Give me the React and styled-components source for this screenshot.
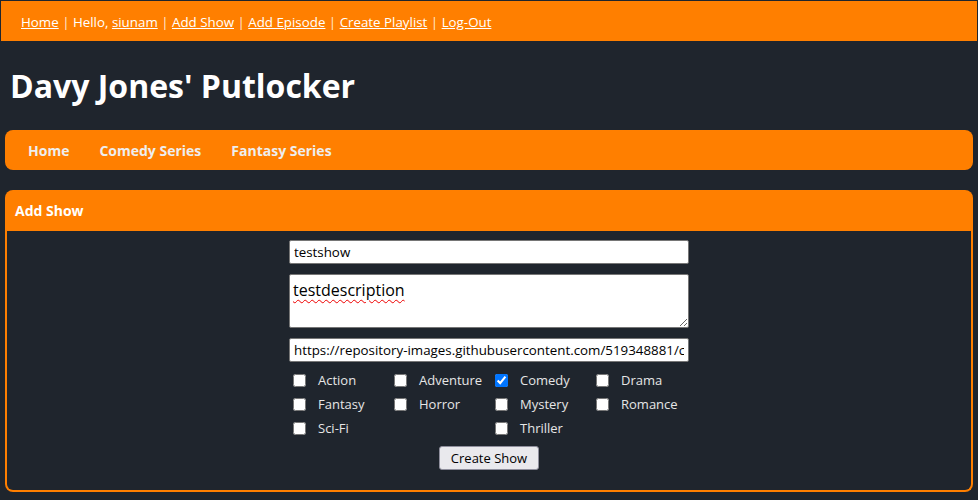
import React from 'react';
import styled, { createGlobalStyle } from 'styled-components';

const GlobalStyle = createGlobalStyle`
  html, body { margin: 0; padding: 0; background: #1f252d; }
  body { font-family: "Open Sans", "Noto Sans", sans-serif; color: #fff; }
  * { box-sizing: border-box; }
`;

const Page = styled.div`
  padding: 1px;
  min-height: 500px;
`;

const TopBar = styled.div`
  background: #ff7f00;
  height: 40px;
  padding: 2px 20px 0;
  display: flex; align-items: center;
  font-size: 13.33px;
  color: #fff;
  white-space: pre;
`;

const TopLink = styled.a`
  color: #fff;
  text-decoration: underline;
`;

const Sep = styled.span`
  color: rgba(255,255,255,0.85);
`;

const Main = styled.div`
  padding: 0 4px;
`;

const Title = styled.h1`
  margin: 23px 0 22px 5px;
  font-size: 32px;
  line-height: 44px;
  font-weight: 700;
  color: #fff;
`;

const NavBar = styled.nav`
  background: #ff7f00;
  border-radius: 8px;
  height: 40px;
  padding: 0 8px;
  display: flex; align-items: center;
`;

const NavLink = styled.a`
  color: #eee;
  font-weight: 700;
  font-size: 14px;
  padding: 0 15px;
  text-decoration: none;
`;

const Panel = styled.section`
  margin-top: 20px;
`;

const PanelHeader = styled.div`
  background: #ff7f00;
  border-radius: 8px 8px 0 0;
  height: 41px;
  padding: 0 10px;
  display: flex; align-items: center;
  font-size: 14px; font-weight: 700;
  color: #fff;
`;

const PanelBody = styled.div`
  border: 2px solid #ff7f00;
  border-top: none;
  border-radius: 0 0 8px 8px;
  padding: 9px 0 20px;
`;

const Form = styled.form`
  width: 400px;
  margin: 0 auto;
  display: flex; flex-direction: column;
`;

const TextInput = styled.input`
  width: 400px; height: 24px;
  margin: 0 0 ${p => p.$gap || 0}px;
  padding: 0 4px;
  border: 1px solid #767676;
  border-radius: 2px;
  background: #fff;
  color: #000;
  font-family: "Open Sans", "Noto Sans", sans-serif;
  font-size: 13.33px;
`;

const TextArea = styled.textarea`
  width: 400px; height: 54px;
  margin: 0 0 10px;
  padding: 4px 3px 2px;
  border: 1px solid #767676;
  border-radius: 2px;
  background: #fff;
  color: #000;
  font-family: "Open Sans", "Noto Sans", sans-serif;
  font-size: 16px;
  line-height: 22px;
  text-decoration: underline wavy #e00;
  text-decoration-thickness: 1px;
  text-underline-offset: 3px;
  resize: both;
`;

const Genres = styled.div`
  display: grid;
  grid-template-columns: repeat(4, 101px);
  grid-auto-rows: 24px;
  margin-top: 6px;
`;

const Genre = styled.label`
  display: flex; align-items: center;
  font-size: 13px;
  color: #e6e6e6;
  input { margin: 0 12px 0 4px; width: 13px; height: 13px; }
`;

const Button = styled.button`
  align-self: center;
  margin-top: 6px;
  width: 100px; height: 24px;
  padding: 0;
  border: 1px solid #8f8f9d;
  border-radius: 3px;
  background: #e9e9ed;
  color: #000;
  font-family: "Open Sans", "Noto Sans", sans-serif;
  font-size: 13px;
`;

const genres = [
  ['Action'], ['Adventure'], ['Comedy', true], ['Drama'],
  ['Fantasy'], ['Horror'], ['Mystery'], ['Romance'],
  ['Sci-Fi'], null, ['Thriller'],
];

export default function App() {
  return (
    <Page>
      <GlobalStyle />
      <TopBar>
        <TopLink href="#">Home</TopLink><Sep> | </Sep>Hello, <TopLink href="#">siunam</TopLink><Sep> | </Sep>
        <TopLink href="#">Add Show</TopLink><Sep> | </Sep>
        <TopLink href="#">Add Episode</TopLink><Sep> | </Sep>
        <TopLink href="#">Create Playlist</TopLink><Sep> | </Sep>
        <TopLink href="#">Log-Out</TopLink>
      </TopBar>
      <Main>
        <Title>Davy Jones' Putlocker</Title>
        <NavBar>
          <NavLink href="#">Home</NavLink>
          <NavLink href="#">Comedy Series</NavLink>
          <NavLink href="#">Fantasy Series</NavLink>
        </NavBar>
        <Panel>
          <PanelHeader>Add Show</PanelHeader>
          <PanelBody>
            <Form onSubmit={e => e.preventDefault()}>
              <TextInput defaultValue="testshow" $gap={10} />
              <TextArea defaultValue="testdescription" spellCheck={false} />
              <TextInput defaultValue="https://repository-images.githubusercontent.com/519348881/c" />
              <Genres>
                {genres.map((g, i) => g ? (
                  <Genre key={i}>
                    <input type="checkbox" defaultChecked={!!g[1]} />
                    {g[0]}
                  </Genre>
                ) : <span key={i} />)}
              </Genres>
              <Button type="submit">Create Show</Button>
            </Form>
          </PanelBody>
        </Panel>
      </Main>
    </Page>
  );
}
